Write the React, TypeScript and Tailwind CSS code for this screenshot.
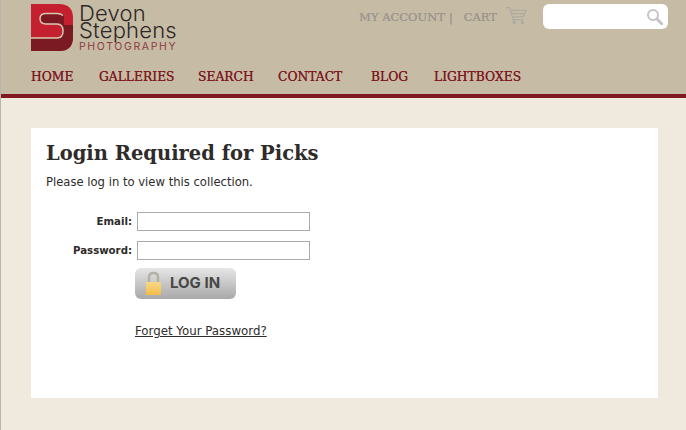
export default function App() {
  const slab = "font-['DejaVu_Serif',serif]";
  const nav = [
    { t: "HOME", w: "w-[68px]" },
    { t: "GALLERIES", w: "w-[99px]" },
    { t: "SEARCH", w: "w-[80px]" },
    { t: "CONTACT", w: "w-[93px]" },
    { t: "BLOG", w: "w-[63px]" },
    { t: "LIGHTBOXES", w: "w-[90px]" },
  ];
  return (
    <div className="h-[430px] w-[686px] overflow-hidden bg-[#f0e9dd] border-l border-[#b9b5ae] font-['DejaVu_Sans',sans-serif]">
      <header className="h-[98px] bg-[#c6bba5] border-b-4 border-[#801a20] pl-[30px] pr-[18px] flex flex-col">
        <div className="flex h-[69px] pt-1">
          <div className="flex">
            <svg width="42" height="47" viewBox="0 0 42 47">
              <path d="M0 0H28Q42 0 42 14V33Q42 47 28 47H0Z" fill="#c5202f" />
              <path d="M33 11Q31 9 26 9H15Q9 9 9 14.500Q9 20 15 20H26Q32 20 32 27Q32 34 26 34H0V47H28Q42 47 42 33V21H33Z" fill="#7c1a24" />
              <path d="M32 11.500Q30 9.500 26 9.500H15Q9 9.500 9 14.500Q9 20 15 20H26Q32 20 32 27Q32 34 26 34H0" fill="none" stroke="#d8c9ae" strokeWidth="1.500" />
            </svg>
            <div className="ml-[6px] text-[#2c2826] font-['Inter',sans-serif] font-light">
              <div className="text-[22px] leading-[18px] h-[18px] tracking-[0.200px]">Devon</div>
              <div className="text-[22px] leading-[17px] h-[17px] tracking-[0.200px]">Stephens</div>
              <div className="text-[10.500px] leading-[16px] h-[16px] tracking-[1.650px] font-normal text-[#8e3b42]">PHOTOGRAPHY</div>
            </div>
          </div>
          <div className="ml-auto flex items-start">
            <div className={`${slab} flex items-center text-[#9c968c] text-[11.500px] leading-[14px] mt-[4px] [text-shadow:0_0_0.6px_#9c968c]`}>
              <span>MY ACCOUNT</span>
              <span className="ml-[4px] mr-[11px]">|</span>
              <span>CART</span>
              <svg width="22" height="19" viewBox="0 0 24 19" fill="none" stroke="#aeaaa2" strokeWidth="1.300" className="ml-[8px] -mt-[2px]">
                <path d="M1 1H5L9 14H20" />
                <path d="M6 4H23L20 11H8" />
                <path d="M7 7.500H21.500" />
                <circle cx="10" cy="17" r="1.300" fill="#aeaaa2" />
                <circle cx="19" cy="17" r="1.300" fill="#aeaaa2" />
              </svg>
            </div>
            <div className="ml-[16px] h-[25px] w-[125px] rounded-[6px] bg-white flex items-center justify-end pr-[5px]">
              <svg width="17" height="17" viewBox="0 0 17 17" fill="none" stroke="#c4c4c4" strokeWidth="2">
                <circle cx="7" cy="7" r="5" />
                <path d="M11 11L16 16" strokeWidth="3" strokeLinecap="round" />
              </svg>
            </div>
          </div>
        </div>
        <nav className={`${slab} flex text-[#7f1a22] text-[12.300px] leading-[16px] [text-shadow:0_0_0.6px_#7f1a22]`}>
          {nav.map((n) => (
            <span key={n.t} className={n.w}>{n.t}</span>
          ))}
        </nav>
      </header>
      <main className="mx-[30px] mt-[30px] h-[270px] w-[627px] bg-white pl-[15px] pt-[12px] text-[#2e2b2a]">
        <h1 className={`${slab} text-[19.500px] leading-[28px] font-bold`}>Login Required for Picks</h1>
        <p className="text-[11.600px] leading-[16px] mt-[6px]">Please log in to view this collection.</p>
        <div className="mt-[22px] flex flex-col gap-[10px]">
          {["Email:", "Password:"].map((l) => (
            <label key={l} className="flex items-center h-[19px]">
              <span className="w-[86px] text-right text-[10.200px] font-bold">{l}</span>
              <input className="ml-[5px] h-[19px] w-[173px] border border-[#ababab] bg-white" />
            </label>
          ))}
        </div>
        <button className="ml-[89px] mt-[8px] h-[31px] w-[101px] rounded-[6px] bg-gradient-to-b from-[#e6e6e6] to-[#a9a9a9] flex items-center pl-[10px]">
          <svg width="17" height="25" viewBox="0 0 17 25">
            <defs>
              <linearGradient id="lock" x1="0" y1="0" x2="0" y2="1">
                <stop offset="0" stopColor="#f6d888" />
                <stop offset="1" stopColor="#f4bd48" />
              </linearGradient>
            </defs>
            <path d="M4 12V6.500Q4 2 8.500 2Q13 2 13 6.500V12" fill="none" stroke="#b5b1a4" strokeWidth="2.500" />
            <rect x="1" y="11" width="15" height="13" rx="1" fill="url(#lock)" />
          </svg>
          <span className="ml-[8px] font-['Inter',sans-serif] text-[15px] font-bold text-[#474747]">LOG IN</span>
        </button>
        <a className="ml-[89px] mt-[24px] block text-[11.800px] leading-[16px] underline text-[#2e2b2a]">Forget Your Password?</a>
      </main>
    </div>
  );
}
